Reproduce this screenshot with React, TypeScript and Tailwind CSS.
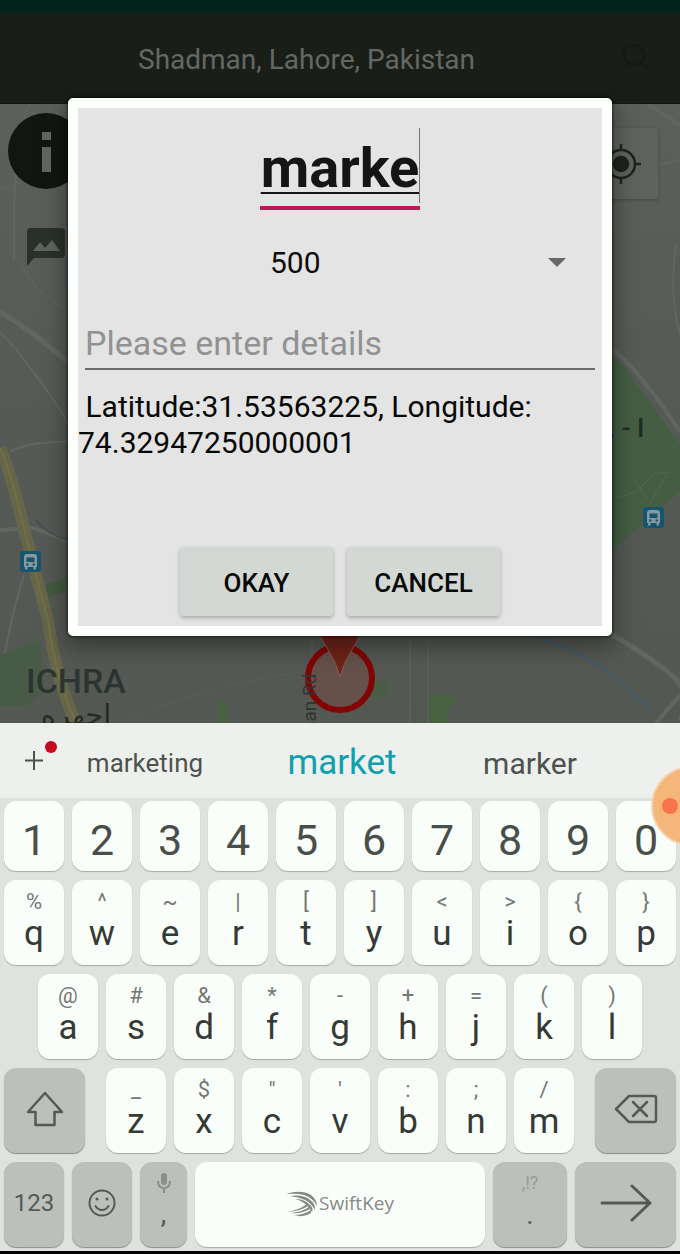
import type { ReactNode } from "react";

type Key = [string, string];

const digits = ["1", "2", "3", "4", "5", "6", "7", "8", "9", "0"];

const rowOne: Key[] = [
  ["%", "q"], ["^", "w"], ["~", "e"], ["|", "r"], ["[", "t"],
  ["]", "y"], ["<", "u"], [">", "i"], ["{", "o"], ["}", "p"],
];
const rowTwo: Key[] = [
  ["@", "a"], ["#", "s"], ["&", "d"], ["*", "f"], ["-", "g"],
  ["+", "h"], ["=", "j"], ["(", "k"], [")", "l"],
];
const rowThree: Key[] = [
  ["_", "z"], ["$", "x"], ['"', "c"], ["'", "v"], [":", "b"], [";", "n"], ["/", "m"],
];

function LetterKey({ hint, letter }: { hint: string; letter: string }) {
  return (
    <button
      type="button"
      className="flex h-[85px] min-w-0 flex-1 flex-col items-center rounded-xl bg-[#fafefa] pt-2 shadow-[0_1px_1px_#a4a9a4]"
    >
      <span className="h-7 text-[22px] leading-7 text-[#747874]">{hint}</span>
      <span className="text-[35px] leading-9 text-[#363a36]">{letter}</span>
    </button>
  );
}

function DarkKey({ label, children }: { label: string; children: ReactNode }) {
  return (
    <button
      type="button"
      aria-label={label}
      className="flex h-[85px] min-w-0 flex-col items-center justify-center rounded-xl bg-[#bbc0bb] pb-1 text-[#555a55] shadow-[0_1px_1px_#888d88]"
    >
      {children}
    </button>
  );
}

function BusStop({ x, y }: { x: number; y: number }) {
  return (
    <g transform={`translate(${x} ${y})`}>
      <rect width="21" height="21" rx="3" fill="#15556f" />
      <path
        d="M4 6Q4 3 7 3h7q3 0 3 3v10h-1v2.500h-2.500v-2.500h-6v2.500H5v-2.500H4z"
        fill="#84989d"
      />
      <path d="M6.500 6.500h8v4.500h-8z" fill="#15556f" />
      <circle cx="7.300" cy="13.500" r="1.200" fill="#15556f" />
      <circle cx="13.700" cy="13.500" r="1.200" fill="#15556f" />
    </g>
  );
}

function MapDrawing() {
  return (
    <svg
      viewBox="0 104 680 619"
      preserveAspectRatio="xMidYMin slice"
      className="absolute inset-0 size-full"
      aria-hidden="true"
    >
      <defs>
        <linearGradient id="land" x1="0" y1="0" x2="0" y2="1">
          <stop offset="0" stopColor="#5b605b" />
          <stop offset="0.5" stopColor="#565a56" />
          <stop offset="1" stopColor="#545853" />
        </linearGradient>
      </defs>
      <rect y="104" width="680" height="619" fill="url(#land)" />
      <g fill="none" stroke="#616661" strokeWidth="3">
        <path d="M0 312Q40 335 78 372" strokeWidth="5" />
        <path d="M0 332Q20 352 48 392T78 452" strokeWidth="2" />
        <path d="M30 104Q12 140 14 260" strokeWidth="2" />
        <path d="M0 190L70 165M18 260Q40 300 70 310" strokeWidth="1" />
        <path d="M0 530L34 528L70 542" strokeWidth="4" />
        <path d="M10 452Q30 440 78 442M24 575Q10 620 4 660" strokeWidth="2" />
        <path d="M36 520Q50 538 78 542" stroke="#484f50" strokeWidth="2" />
        <path d="M655 166L680 160M676 245Q668 300 682 340" strokeWidth="2" />
        <path d="M648 104L680 125" strokeWidth="4" />
        <path d="M608 345Q640 370 680 432" strokeWidth="4" />
        <path d="M595 625Q640 650 668 672T680 720" strokeWidth="5" />
        <path d="M656 723L680 695" strokeWidth="4" />
        <path d="M428 640V723M312 636V670M410 640V723" strokeWidth="1" />
        <path d="M120 723Q260 660 440 665" strokeWidth="1" stroke="#5a5d58" />
      </g>
      <path d="M608 352L625 368L680 444V492L630 535L608 555z" fill="#455e43" />
      <path d="M608 500L636 492L654 474L668 472L650 503L634 480" fill="none" stroke="#4f6a4d" strokeWidth="1" />
      <path d="M0 655L40 640L44 690L26 706H0z" fill="#485b46" />
      <path d="M46 584L66 578V592L48 597z" fill="#435a40" />
      <path d="M218 702h9v21h-9zM430 694l27 2l-10 18v9h-17z" fill="#47633f" />
      <path d="M364 678l23 4l-2 16l-21-2z" fill="#475e43" />
      <path d="M0 448Q10 470 22 520T48 620Q56 680 76 723" fill="none" stroke="#67664a" strokeWidth="12" />
      <path d="M0 448Q10 470 22 520T48 620Q56 680 76 723" fill="none" stroke="#736f45" strokeWidth="2" />
      <path d="M540 638Q590 655 618 680T652 712" fill="none" stroke="#475962" strokeWidth="3" />
      <BusStop x={20} y={551} />
      <BusStop x={643} y={507} />
      <text x="608" y="437" fontSize="26" fontWeight="500" fill="#1e2c23">. - I</text>
      <text x="26" y="693" fontSize="34" fontWeight="500" fill="#2c3431">ICHRA</text>
      <text x="76" y="725" fontSize="29" textAnchor="middle" fill="#252b28" fontFamily="DejaVu Sans, sans-serif">
        اچهره
      </text>
      <circle cx="340" cy="678" r="32" fill="#65504a" stroke="#820504" strokeWidth="6" />
      <path d="M318 630H362Q356 644 349 655Q343 665 340 677Q337 665 331 655Q324 644 318 630z" fill="#6f2418" stroke="#806156" strokeWidth="1" />
      <text transform="translate(316 732) rotate(-90)" fontSize="19" fill="#2f3431">
        nan Rd
      </text>
    </svg>
  );
}

export default function App() {
  return (
    <div className="relative flex min-h-screen flex-col overflow-hidden bg-black font-[Roboto,sans-serif]">
      <div className="h-[13px] bg-[#01231b]" />
      <header className="flex h-[91px] items-center justify-between border-b border-[#111511] bg-[#1a1e19] pr-7 pl-[138px]">
        <h1 className="pt-1 text-[28px] leading-9 text-[#646864]">Shadman, Lahore, Pakistan</h1>
        <button type="button" aria-label="Search" className="text-[#161a16]">
          <svg viewBox="0 0 32 32" className="size-8" fill="none" stroke="currentColor" strokeWidth="3">
            <circle cx="14" cy="13" r="10" />
            <path d="M21 20l7 7" />
          </svg>
        </button>
      </header>

      <main className="relative flex-1 overflow-hidden">
        <MapDrawing />
        <button type="button" aria-label="Information" className="absolute top-[9px] left-2">
          <svg viewBox="0 0 76 76" className="size-[76px]">
            <circle cx="38" cy="38" r="38" fill="#111611" />
            <path d="M34 19h9v8h-9zM34 34h9v25h-9z" fill="#626662" />
          </svg>
        </button>
        <button type="button" aria-label="Photo message" className="absolute top-[124px] left-[27px]">
          <svg viewBox="0 0 38 38" className="size-[38px]">
            <path d="M4 0h30q4 0 4 4v22q0 4-4 4H7l-7 8V4q0-4 4-4z" fill="#2a312a" />
            <path d="M6 23l7-9 5 6 7-8 8 11z" fill="#5e645e" />
          </svg>
        </button>
        <button
          type="button"
          aria-label="My location"
          className="absolute top-6 right-[22px] flex size-[71px] items-center justify-center bg-[#5f635f] pr-1 shadow-[0_1px_3px_#434743]"
        >
          <svg viewBox="0 0 40 40" className="size-10" fill="none" stroke="#1f231f" strokeWidth="2.500">
            <circle cx="20" cy="20" r="14" />
            <circle cx="20" cy="20" r="7" fill="#1f231f" />
            <path d="M20 0v6M20 34v6M0 20h6M34 20h6" />
          </svg>
        </button>
      </main>

      <form
        onSubmit={(event) => event.preventDefault()}
        className="absolute top-[98px] left-[10%] flex w-4/5 flex-col rounded-[5px] border-10 border-[#fdfffd] bg-[#e4e4e4] shadow-[0_8px_22px_4px_#00000059,0_0_3px_1px_#00000080]"
      >
        <div className="relative mx-auto mt-5 w-40 border-b-4 border-[#b81b57]">
          <input
            aria-label="Title"
            defaultValue="marke"
            className="block h-[78px] w-full bg-transparent pt-0.5 text-center text-[56px] font-bold text-[#141614] underline decoration-2 underline-offset-5 outline-none"
          />
          <span className="absolute top-0 right-0 h-[75px] w-px bg-[#777777]" />
        </div>
        <div className="relative mt-[27px] h-[50px]">
          <select
            aria-label="Radius"
            className="size-full appearance-none bg-transparent pl-[192px] text-[30px] text-[#0c0e0c] outline-none"
          >
            <option>500</option>
          </select>
          <svg viewBox="0 0 18 9" className="pointer-events-none absolute top-[21px] right-9 h-[9px] w-[18px]">
            <path d="M0 0h18l-9 9z" fill="#686868" />
          </svg>
        </div>
        <input
          aria-label="Details"
          placeholder="Please enter details"
          className="mx-[7px] mt-[31px] h-[52px] border-b-2 border-[#6d6d6d] bg-transparent text-[34px] outline-none placeholder:text-[#929292]"
        />
        <p className="mt-[19px] whitespace-pre text-[30px] leading-9 text-[#060806]">
          {" Latitude:31.53563225, Longitude:\n74.32947250000001"}
        </p>
        <div className="mt-[86px] mb-[10px] flex justify-center gap-3.5">
          <button
            type="submit"
            className="h-[69px] w-[153px] rounded-sm bg-[#d4d8d4] pt-1 text-[26px] font-medium text-[#080a08] shadow-[0_2px_4px_#a5a8a5]"
          >
            OKAY
          </button>
          <button
            type="button"
            className="h-[69px] w-[153px] rounded-sm bg-[#d4d8d4] pt-1 text-[26px] font-medium text-[#080a08] shadow-[0_2px_4px_#a5a8a5]"
          >
            CANCEL
          </button>
        </div>
      </form>

      <section aria-label="Keyboard" className="relative overflow-hidden bg-[#dfe3de]">
        <div className="flex h-[75px] items-center bg-[#edf0ec] text-[#4e524e]">
          <button type="button" aria-label="Add" className="relative h-full w-[68px]">
            <svg viewBox="0 0 68 75" className="size-full">
              <path d="M34 28v19M25 37.500h18" stroke="#4e524e" strokeWidth="2" />
              <circle cx="51" cy="24" r="6" fill="#c80a1e" />
            </svg>
          </button>
          <div className="grid h-full flex-1 grid-cols-[154fr_240fr_136fr_82fr] items-center pt-1.5">
            <button type="button" className="text-[26px]">marketing</button>
            <button type="button" className="text-[35px] text-[#109fac]">market</button>
            <button type="button" className="text-[30px]">marker</button>
          </div>
        </div>

        <div className="flex flex-col gap-[9px] px-1 pt-[3px] pb-1">
          <div className="flex gap-2">
            {digits.map((digit) => (
              <button
                key={digit}
                type="button"
                className="h-[70px] min-w-0 flex-1 rounded-xl bg-[#fafefa] pt-2 text-[43px] leading-none text-[#4a4e4a] shadow-[0_1px_1px_#a4a9a4]"
              >
                {digit}
              </button>
            ))}
          </div>
          <div className="flex gap-2">
            {rowOne.map(([hint, letter]) => (
              <LetterKey key={letter} hint={hint} letter={letter} />
            ))}
          </div>
          <div className="flex gap-2 px-[34px]">
            {rowTwo.map(([hint, letter]) => (
              <LetterKey key={letter} hint={hint} letter={letter} />
            ))}
          </div>
          <div className="grid grid-cols-[81fr_468fr_81fr] gap-[21px]">
            <DarkKey label="Shift">
              <svg viewBox="0 0 38 36" className="h-9 w-[38px]" fill="none" stroke="currentColor" strokeWidth="2.500" strokeLinejoin="round">
                <path d="M19 2L36 21H28.500V34H9.500V21H2z" />
              </svg>
            </DarkKey>
            <div className="flex gap-2">
              {rowThree.map(([hint, letter]) => (
                <LetterKey key={letter} hint={hint} letter={letter} />
              ))}
            </div>
            <DarkKey label="Delete">
              <svg viewBox="0 0 44 30" className="h-[30px] w-11" fill="none" stroke="currentColor" strokeWidth="2.500" strokeLinejoin="round">
                <path d="M15 2H40q2 0 2 2V26q0 2-2 2H15L2 15z" />
                <path d="M19 8L33 22M33 8L19 22" strokeLinecap="round" />
              </svg>
            </DarkKey>
          </div>
          <div className="grid grid-cols-[60fr_60fr_47fr_290fr_74fr_101fr] gap-2">
            <DarkKey label="Numbers">
              <span className="text-[24px]">123</span>
            </DarkKey>
            <DarkKey label="Emoji">
              <svg viewBox="0 0 28 28" className="size-7" fill="none" stroke="currentColor" strokeWidth="2">
                <circle cx="14" cy="14" r="12.500" />
                <path d="M7.500 17Q10 21 14 21T20.500 17" strokeLinecap="round" />
                <circle cx="9" cy="10" r="1.500" fill="currentColor" stroke="none" />
                <circle cx="19" cy="10" r="1.500" fill="currentColor" stroke="none" />
              </svg>
            </DarkKey>
            <DarkKey label="Comma">
              <svg viewBox="0 0 14 22" className="h-[22px] w-3.5" fill="none" stroke="#8a8f8a" strokeWidth="2">
                <rect x="4" y="1" width="6" height="12" rx="3" fill="#8a8f8a" stroke="none" />
                <path d="M1 9q0 7 6 7t6-7M7 16v5" />
              </svg>
              <span className="h-10 text-[28px] leading-10">,</span>
            </DarkKey>
            <button
              type="button"
              aria-label="Space"
              className="flex h-[85px] items-center justify-center gap-px rounded-xl bg-[#fafefa] pb-0.5 text-[#868a86] shadow-[0_1px_1px_#a4a9a4]"
            >
              <svg viewBox="0 0 32 26" className="h-[26px] w-8" fill="currentColor">
                <path d="M0 3Q15-2 25 4Q31 9 31 15Q27 7 18 4Q10 2 0 3z" />
                <path d="M4 5Q16 3 23 8Q30 13 29 19Q25 12 19 9Q12 6 4 5z" />
                <path d="M9 8Q18 8 23 13Q28 17 26 21Q22 15 18 12Q14 9 9 8z" />
                <path d="M1 21Q13 19 21 13L22 15Q15 20 1 21z" />
                <path d="M5 22Q16 21 23 16L24 18Q16 23 5 22z" />
                <path d="M8 24Q18 24 25 19L25 22Q18 27 8 24z" />
              </svg>
              <span className="font-['Open_Sans',sans-serif] text-[19px]">SwiftKey</span>
            </button>
            <DarkKey label="Period">
              <span className="h-6 text-[18px] leading-6 text-[#969b96]">,!?</span>
              <span className="h-10 text-[28px] leading-10">.</span>
            </DarkKey>
            <DarkKey label="Enter">
              <svg viewBox="0 0 52 38" className="h-[38px] w-[52px]" fill="none" stroke="currentColor" strokeWidth="3" strokeLinecap="round" strokeLinejoin="round">
                <path d="M2 19H50M32 2L50 19L32 36" />
              </svg>
            </DarkKey>
          </div>
        </div>
        <div className="pointer-events-none absolute top-[43px] -right-[51px] flex size-20 items-center rounded-full border-2 border-[#f5d3b0] bg-[#f5b67a] pl-[9px]">
          <span className="size-4 rounded-full bg-[#f8744c]" />
        </div>
      </section>
      <div className="h-[3px] bg-black" />
    </div>
  );
}
